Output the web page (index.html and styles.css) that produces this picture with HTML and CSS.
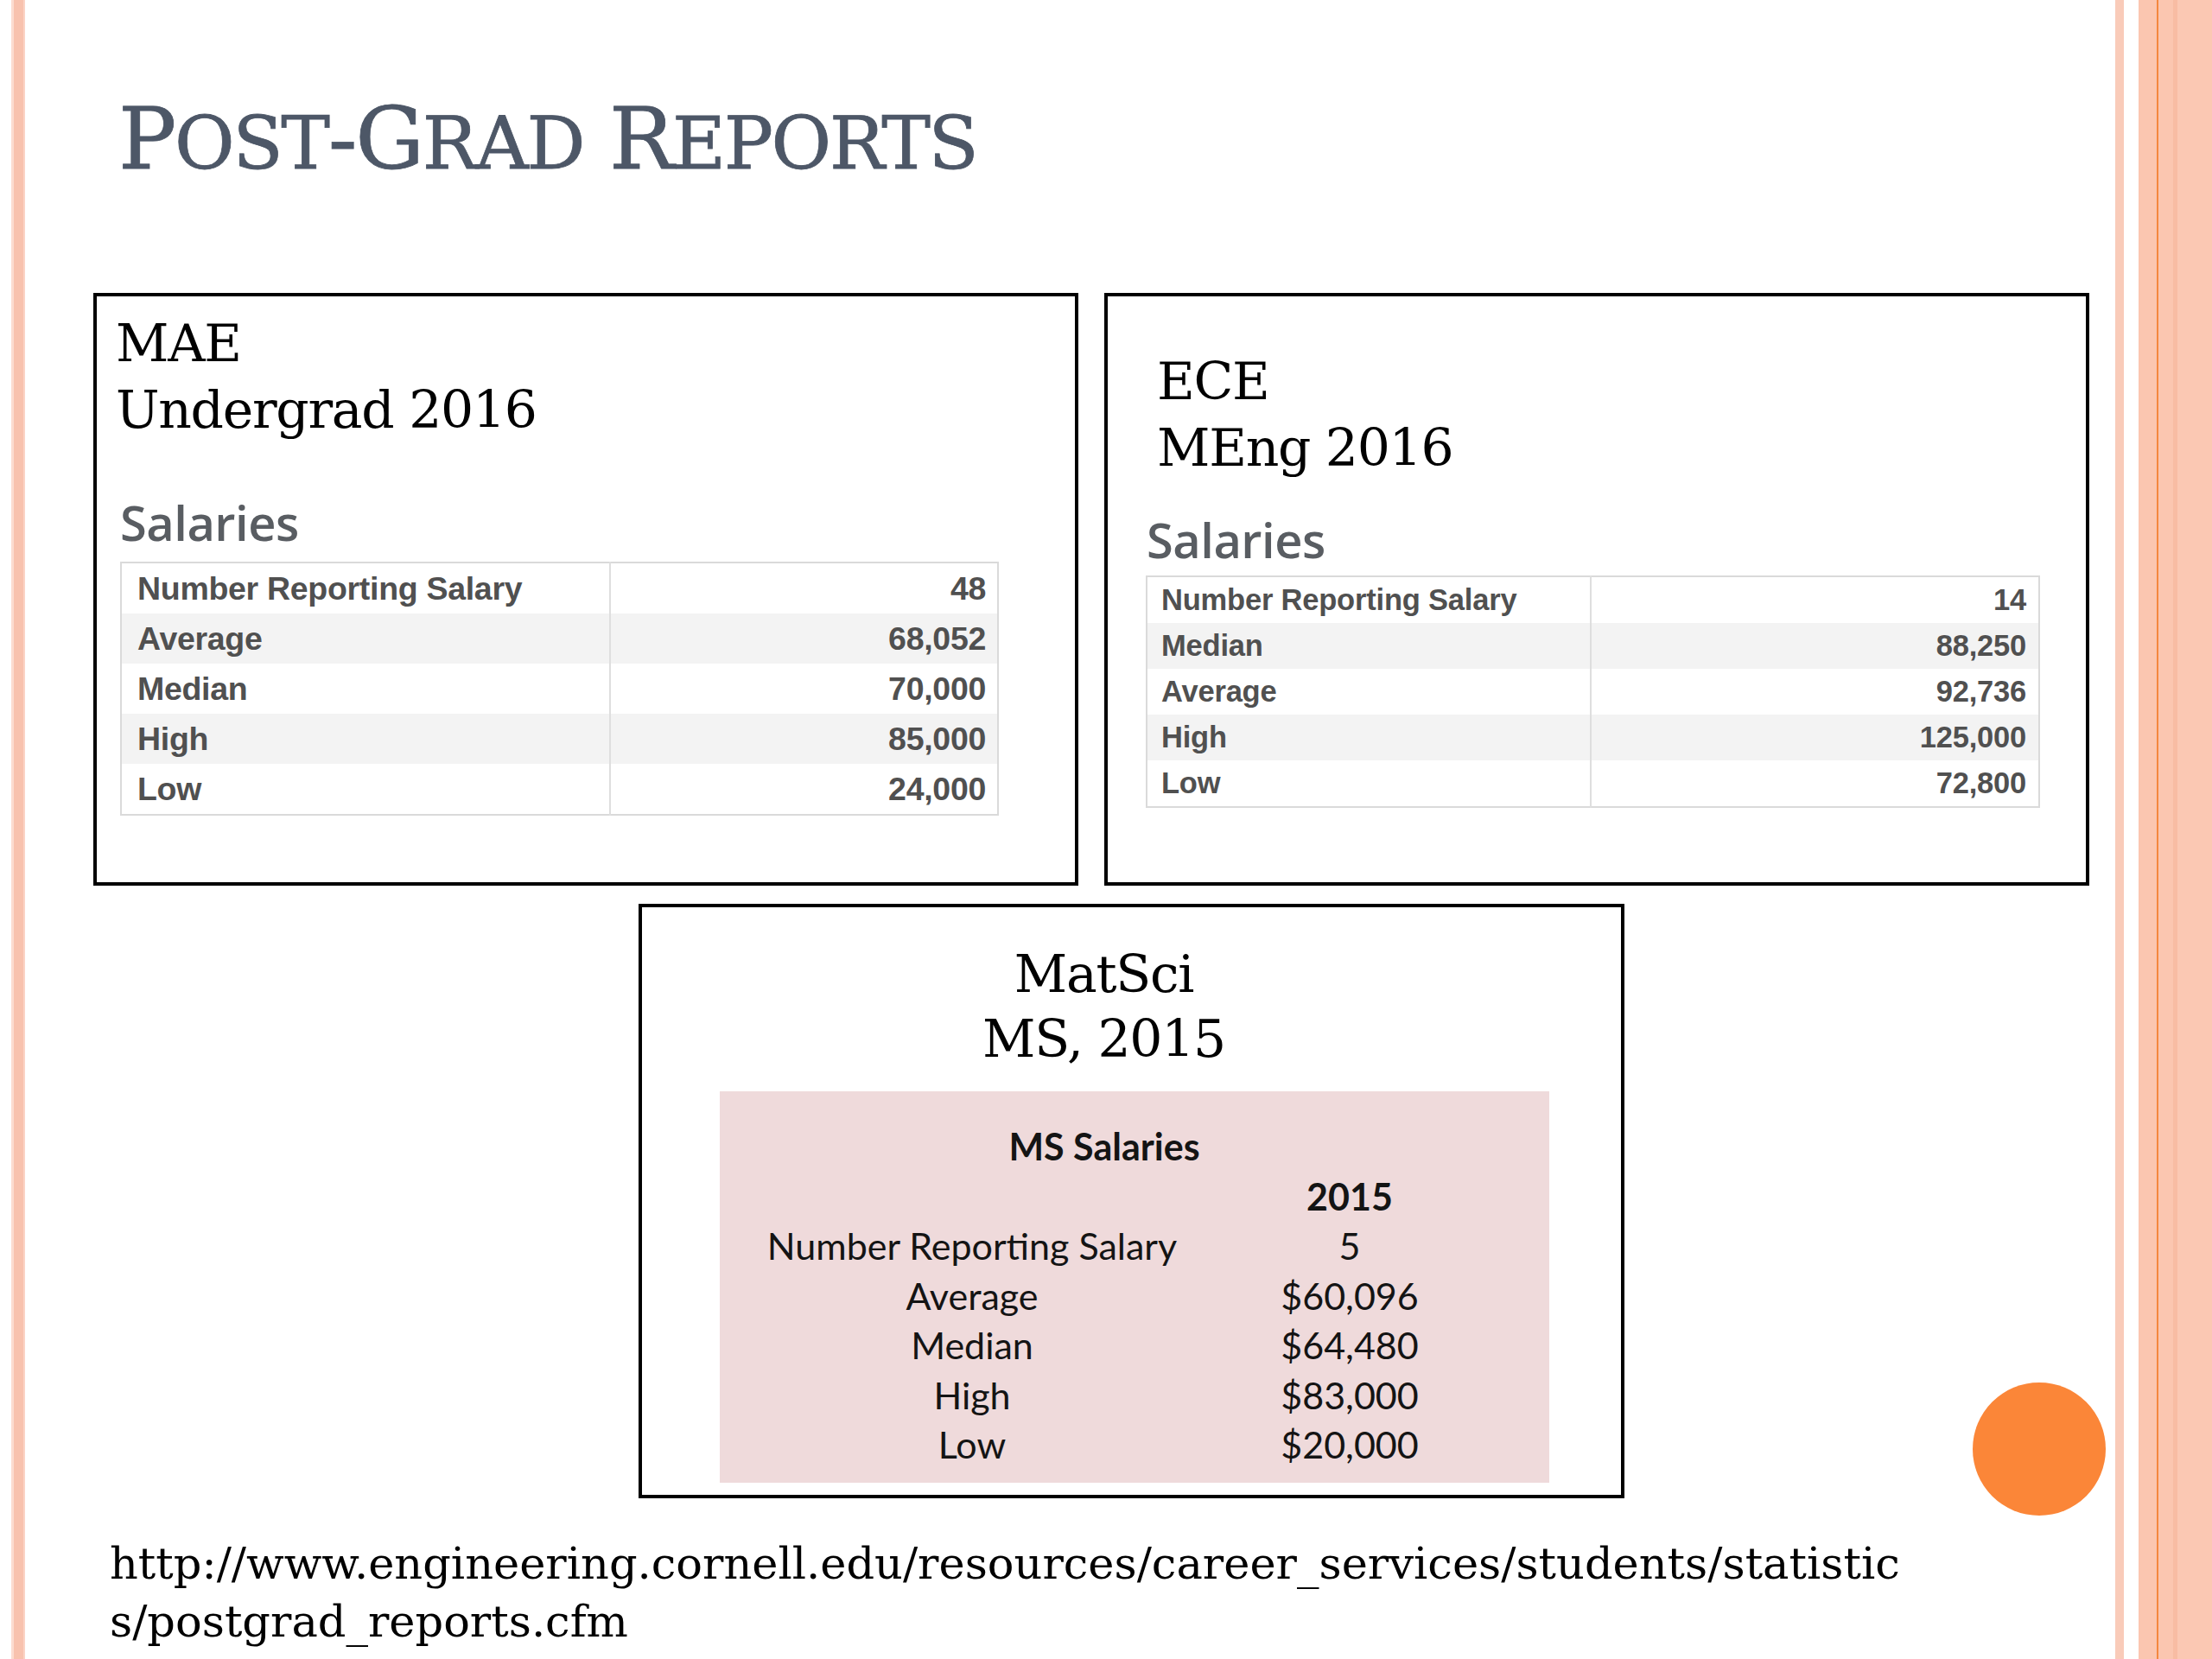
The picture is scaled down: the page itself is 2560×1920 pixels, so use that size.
FILE: index.html
```html
<!DOCTYPE html>
<html lang="en">
<head>
<meta charset="utf-8">
<title>Post-Grad Reports</title>
<link rel="stylesheet" href="styles.css">
</head>
<body>
<div class="slide">
  <div class="rail-left"><div class="stripe-left"></div></div>

  <main class="content">
    <h1 class="title">P<span class="sc">OST</span>-G<span class="sc">RAD</span> R<span class="sc">EPORTS</span></h1>

    <div class="row-top">
      <section class="box box-mae">
        <div class="box-head head-mae">MAE<br>Undergrad 2016</div>
        <div class="sal-title sal-mae">Salaries</div>
        <table class="sal-table t-mae">
          <tr><td>Number Reporting Salary</td><td>48</td></tr>
          <tr><td>Average</td><td>68,052</td></tr>
          <tr><td>Median</td><td>70,000</td></tr>
          <tr><td>High</td><td>85,000</td></tr>
          <tr><td>Low</td><td>24,000</td></tr>
        </table>
      </section>

      <section class="box box-ece">
        <div class="box-head head-ece">ECE<br>MEng 2016</div>
        <div class="sal-title sal-ece">Salaries</div>
        <table class="sal-table t-ece">
          <tr><td>Number Reporting Salary</td><td>14</td></tr>
          <tr><td>Median</td><td>88,250</td></tr>
          <tr><td>Average</td><td>92,736</td></tr>
          <tr><td>High</td><td>125,000</td></tr>
          <tr><td>Low</td><td>72,800</td></tr>
        </table>
      </section>
    </div>

    <section class="box box-mat">
      <div class="head-mat">MatSci<br>MS, 2015</div>
      <div class="pink">
        <div class="ms-title">MS Salaries</div>
        <div class="ms-grid">
          <div></div><div class="ms-year">2015</div>
          <div>Number Reporting Salary</div><div>5</div>
          <div>Average</div><div>$60,096</div>
          <div>Median</div><div>$64,480</div>
          <div>High</div><div>$83,000</div>
          <div>Low</div><div>$20,000</div>
        </div>
      </div>
    </section>

    <p class="url"><span class="url-line">http://www.engineering.cornell.edu/resources/career_services/students/statistic</span><span class="url-line">s/postgrad_reports.cfm</span></p>
  </main>

  <div class="rail-right">
    <div class="rs-stripe"></div>
    <div class="rs-gap"></div>
    <div class="rs-block">
      <div class="rs-a"></div>
      <div class="rs-line"></div>
      <div class="rs-b"></div>
      <div class="rs-dark"></div>
      <div class="rs-c"></div>
    </div>
  </div>

  <div class="dot"></div>
</div>
</body>
</html>
```

FILE: styles.css
```css
html, body {
  margin: 0;
  padding: 0;
  background: #ffffff;
}

.slide {
  position: relative;
  width: 2560px;
  height: 1920px;
  display: flex;
  overflow: hidden;
  background: #ffffff;
  font-family: "DejaVu Serif", "Liberation Serif", serif;
  color: #000;
}

/* left decorative rail */
.rail-left {
  width: 29px;
  flex: none;
  display: flex;
}
.stripe-left {
  margin-left: 13px;
  width: 16px;
  height: 100%;
  box-sizing: border-box;
  background: #f8c2ae;
  border-left: 3px solid #fcdcd0;
  border-right: 2px solid #fbd3c5;
}

/* right decorative rail */
.rail-right {
  width: 112px;
  flex: none;
  display: flex;
}
.rs-stripe { width: 10px; background: #f9cbb9; }
.rs-gap { width: 17px; background: #ffffff; }
.rs-block { flex: 1; display: flex; }
.rs-a { width: 21px; background: #fbc6b0; }
.rs-line { width: 2px; background: #f5883f; }
.rs-b { width: 17px; background: #fbc6b0; }
.rs-dark { width: 5px; background: #f8bca3; }
.rs-c { flex: 1; background: #fbc8b3; }

.content {
  flex: 1;
  display: flex;
  flex-direction: column;
}

.title {
  margin: 111px 0 0 108px;
  font-family: "DejaVu Serif", serif;
  font-weight: normal;
  font-size: 100px;
  line-height: 100px;
  color: #4d5767;
  letter-spacing: -2.3px;
  white-space: nowrap;
  -webkit-text-stroke: 0.8px #4d5767;
}
.title .sc {
  font-size: 85px;
}

.row-top {
  display: flex;
  gap: 30px;
  margin: 123px 0 0 79px;
}

.box {
  box-sizing: border-box;
  border: 4px solid #000;
  background: #fff;
  height: 686px;
  width: 1140px;
  display: flex;
  flex-direction: column;
  align-items: flex-start;
}

.box-head {
  font-size: 60px;
  line-height: 77px;
  letter-spacing: -1.3px;
  white-space: nowrap;
}
.head-mae { margin: 16px 0 0 22px; }
.head-ece { margin: 60px 0 0 57px; }

.sal-title {
  font-family: "Open Sans", "DejaVu Sans", sans-serif;
  font-weight: 600;
  font-size: 56px;
  line-height: 60px;
  color: #595d62;
  letter-spacing: -0.5px;
}
.sal-mae { margin: 61px 0 0 27px; }
.sal-ece { margin: 37px 0 0 45px; }

.sal-table {
  border-collapse: collapse;
  font-family: "Liberation Sans", Arial, sans-serif;
  font-weight: bold;
  color: #505050;
  border: 2px solid #dadada;
}
.sal-table td {
  padding: 0;
  white-space: nowrap;
}
.sal-table td:first-child {
  border-right: 2px solid #dedede;
}
.sal-table td:last-child {
  text-align: right;
}
.sal-table tr:nth-child(even) td {
  background: #f3f3f3;
}

.t-mae {
  margin: 16px 0 0 27px;
  width: 1017px;
  font-size: 37.5px;
  letter-spacing: -0.3px;
}
.t-mae td { height: 58px; }
.t-mae td:first-child { width: 546px; padding-left: 18px; }
.t-mae td:last-child { padding-right: 13px; }

.t-ece {
  margin: 12px 0 0 44px;
  width: 1035px;
  font-size: 34.5px;
  letter-spacing: -0.2px;
}
.t-ece td { height: 53px; }
.t-ece td:first-child { width: 496px; padding-left: 16px; }
.t-ece td:last-child { padding-right: 14px; }

/* MatSci box */
.box-mat {
  margin: 21px 0 0 710px;
  width: 1141px;
  height: 688px;
  align-items: stretch;
}
.head-mat {
  margin-top: 40px;
  padding-right: 64px;
  text-align: center;
  font-size: 60px;
  line-height: 75px;
  letter-spacing: -1.3px;
}
.pink {
  margin: 23px 0 0 90px;
  width: 960px;
  height: 453px;
  box-sizing: border-box;
  padding: 35px 46px 0 40px;
  background: #efdadb;
  font-family: Lato, "Open Sans", sans-serif;
  font-size: 43px;
  line-height: 57.5px;
  color: #141414;
}
.ms-title {
  font-weight: bold;
  text-align: center;
  padding-right: 64px;
}
.ms-grid {
  display: grid;
  grid-template-columns: 504px 370px;
  text-align: center;
}
.ms-year { font-weight: bold; }

.url {
  margin: 42px 0 0 98px;
  font-size: 51px;
  line-height: 67px;
  color: #000;
}
.url-line {
  display: block;
  white-space: nowrap;
}

.dot {
  position: absolute;
  left: 2283px;
  top: 1600px;
  width: 154px;
  height: 154px;
  border-radius: 50%;
  background: #fb8638;
}
```
